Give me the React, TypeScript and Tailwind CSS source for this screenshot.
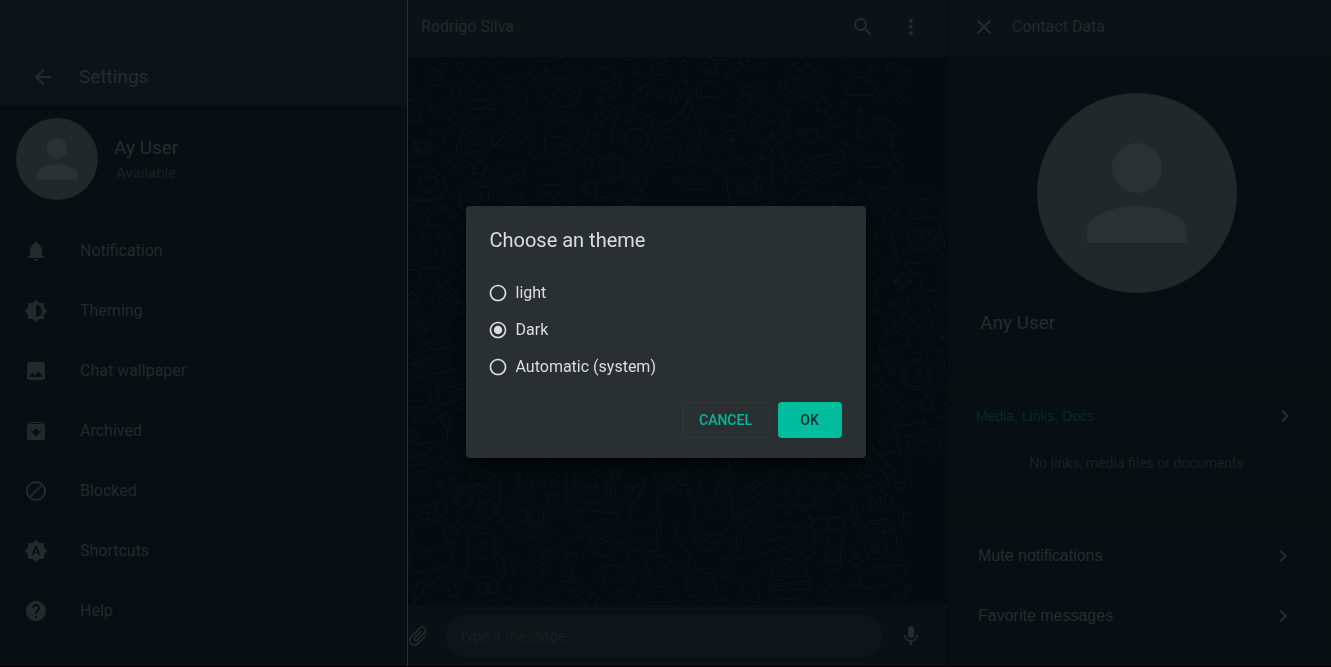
import { useState, type ReactNode } from "react";
import type { IconType } from "react-icons";
import {
  MdArchive,
  MdArrowBack,
  MdAttachFile,
  MdBlock,
  MdBrightness6,
  MdBrightnessAuto,
  MdChevronRight,
  MdClose,
  MdHelp,
  MdImage,
  MdMic,
  MdMoreVert,
  MdNotifications,
  MdPerson,
  MdRadioButtonChecked,
  MdRadioButtonUnchecked,
  MdSearch,
} from "react-icons/md";

const menu: { label: string; Icon: IconType }[] = [
  { label: "Notification", Icon: MdNotifications },
  { label: "Theming", Icon: MdBrightness6 },
  { label: "Chat wallpaper", Icon: MdImage },
  { label: "Archived", Icon: MdArchive },
  { label: "Blocked", Icon: MdBlock },
  { label: "Shortcuts", Icon: MdBrightnessAuto },
  { label: "Help", Icon: MdHelp },
];

const themes = ["light", "Dark", "Automatic (system)"];

function IconButton({ label, children }: { label: string; children: ReactNode }) {
  return (
    <button type="button" aria-label={label} className="grid size-12 shrink-0 place-items-center text-2xl text-[#272b2e]">
      {children}
    </button>
  );
}

function SettingsPanel() {
  return (
    <aside className="flex min-w-0 flex-col border-r border-[#2a2e31] bg-[#070f12]">
      <header className="flex h-[105px] shrink-0 items-end bg-[#0e1317] pb-1 pl-[19px]">
        <IconButton label="Back">
          <MdArrowBack />
        </IconButton>
        <h1 className="pb-2.5 pl-3 text-[19px] leading-7 text-[#282c2f]">Settings</h1>
      </header>
      <div className="flex h-[116px] shrink-0 items-start gap-4 px-4 pt-[13px]">
        <span className="grid size-[82px] shrink-0 place-items-center rounded-full bg-[#222729] text-[#2b3033]">
          <MdPerson size={62} />
        </span>
        <div className="pt-4">
          <p className="text-[19px] leading-7 text-[#282c2f]">Ay User</p>
          <p className="pl-0.5 text-[15px] leading-[22px] text-[#1b2023]">Available</p>
        </div>
      </div>
      <nav>
        {menu.map(({ label, Icon }) => (
          <a key={label} href="#" className="flex h-[60px] items-center gap-8 px-6 text-base text-[#24292c]">
            <Icon size={24} className="shrink-0" />
            {label}
          </a>
        ))}
      </nav>
    </aside>
  );
}

const starPath = "M0-20L6-7L20-5L10 6L13 20L0 13L-13 20L-10 6L-20-5L-6-7Z";
const sparkPath = "M0-24Q3-3 24 0Q3 3 0 24Q-3 3-24 0Q-3-3 0-24Z";
const cloudPath = "M-28 20C-44 12-36-8-22-8C-16-32 16-30 18-12C40-16 46 14 26 20Z";
const boltPath = "M-6-28L14-28L6-6L16-6L-14 30L-6 4L-16 4Z";
const heartPath = "M0 18L-16 2C-26-14-6-24 0-10C8-24 26-12 16 2Z";

function Marks({ d, at }: { d: string; at: number[][] }) {
  return (
    <>
      {at.map(([x, y, s = 1, r = 0]) => (
        <path key={`${x}-${y}`} d={d} transform={`translate(${x} ${y}) rotate(${r}) scale(${s})`} />
      ))}
    </>
  );
}

function Dots({ at }: { at: number[][] }) {
  return (
    <>
      {at.map(([x, y, r = 7]) => (
        <circle key={`${x}-${y}`} cx={x} cy={y} r={r} />
      ))}
    </>
  );
}

function Planet({ x, y, r = 0 }: { x: number; y: number; r?: number }) {
  return (
    <g transform={`translate(${x} ${y}) rotate(${r})`}>
      <path d="M-32-6C-28-38 28-38 32-6M-30 14C-18 38 18 38 30 14" />
      <path d="M-32-8C-60 2-50 12 0 14S60 2 32-8M-32 0C-14 10 14 10 32 0" />
    </g>
  );
}

function Camera({ x, y, r = 0 }: { x: number; y: number; r?: number }) {
  return (
    <g transform={`translate(${x} ${y}) rotate(${r})`}>
      <path d="M-42-24H-22L-16-38H12L18-24H42V36H-42Z" />
      <circle r="20" cy="4" />
      <circle r="8" cy="4" />
    </g>
  );
}

function Gear({ x, y, s = 1 }: { x: number; y: number; s?: number }) {
  return (
    <g transform={`translate(${x} ${y}) scale(${s})`}>
      <path d="M-5-26H5L8-18L17-21L22-14L18-6L26-4V5L18 8L20 17L13 22L6 18L3 26H-6L-8 18L-17 20L-22 13L-18 6L-26 3V-6L-18-8L-20-16L-13-22L-6-18Z" />
      <circle r="11" />
    </g>
  );
}

function Wallpaper() {
  return (
    <svg
      aria-hidden="true"
      viewBox="0 0 539 548"
      preserveAspectRatio="xMidYMid slice"
      className="absolute inset-0 size-full text-[#0b1114]"
      fill="none"
      stroke="currentColor"
      strokeLinejoin="round"
      strokeLinecap="round"
      strokeWidth="4"
    >
      <g transform="translate(-8 -57) scale(.3333)">
        <Dots at={[[132,185],[180,198,11],[229,207],[207,243,11],[72,283],[142,312,12],[96,327],[124,336],[88,394],[188,401],[504,190],[525,213,12],[440,209],[469,205],[602,295],[634,288],[663,262],[634,324,10],[690,327,10],[708,223],[733,229],[782,292],[820,296,10],[853,192,11],[857,245,6],[978,232],[1005,211],[1082,185,12],[1085,260],[1056,305],[1032,318],[1100,307,11],[892,342],[1074,358,11],[1117,367],[1168,300],[1216,321],[1243,282],[1336,307],[1380,330],[1340,187,11],[1411,204],[1473,202,14],[1442,292],[1500,300,11],[1307,365,16],[1275,406,11],[1336,429],[1450,422],[1477,433],[1366,463,11],[408,347],[438,339],[480,338],[374,358,11],[326,410],[332,433],[304,440],[398,426],[140,480],[168,508],[288,527],[308,572],[360,587],[416,516],[453,511],[590,404],[580,437],[600,475],[717,481],[867,401],[875,436,11],[998,421],[1060,412],[1090,420],[1166,414],[1187,446],[1147,464],[948,516],[828,538],[906,495],[590,545],[1325,590],[1353,596],[30,605,9],[1493,550],[1516,565],[1160,340]]} />
        <Marks d={starPath} at={[[167,275,1,10],[47,346,1.1],[238,502,1.3,10],[932,197,1.3],[1042,270,1.1,10],[1268,316,1.2,10],[1387,395,1,10],[570,562,1.3,-10]]} />
        <Marks d={sparkPath} at={[[392,232],[165,354,.9],[134,404,.8],[405,461,.8],[604,352],[826,272,.8],[940,336,.9],[1118,427,1.3],[1203,194,1.2],[1158,513,1.1],[1485,495,1.2],[1380,560],[346,605]]} />
        <Marks d={cloudPath} at={[[248,280,1],[925,270,1],[998,372,1],[1256,230,.75],[1380,262,1.2],[1420,487,.8],[880,550,.95]]} />
        <Marks d={boltPath} at={[[1030,186,1.1,10],[1155,363,1]]} />
        <Marks d={heartPath} at={[[320,248,1],[85,552,1.4],[776,458,.8],[814,445,.8]]} />
        <Planet x={612} y={236} />
        <Planet x={1182} y={266} r={24} />
        <Planet x={335} y={518} r={-30} />
        <Gear x={104} y={231} />
        <Camera x={224} y={588} r={-4} />
        <path d="M238 172C250 200 302 200 315 172M416 172L424 188L486 172M666 172L680 182L704 172L714 200L704 206L692 180M935 172C940 182 985 182 992 172" />
        <circle cx="781" cy="198" r="27" /><circle cx="785" cy="190" r="12" />
        <path d="M22 210C50 230 52 270 44 300H22M22 242C40 236 42 266 22 274" />
        <path d="M426 258C444 228 510 226 540 270C546 330 490 330 448 304C426 292 420 274 426 258Z" />
        <ellipse cx="487" cy="262" rx="16" ry="10" /><path d="M444 258L456 254M454 282L466 284M520 270L526 280M500 244L512 246M540 280C520 300 520 290 505 306" />
        <path d="M700 280C714 260 734 250 742 254L764 240M742 254C758 264 760 272 748 282C730 286 724 300 708 302C696 300 696 288 700 280ZM738 250L754 238M754 268L770 254" />
        <path d="M868 278C868 320 836 370 774 374C778 396 830 390 856 358C886 320 880 300 868 278ZM868 286C852 330 830 358 790 374" />
        <path d="M214 366C252 316 320 268 384 280C382 350 330 392 272 444C250 470 220 440 168 470C166 440 180 400 214 366ZM286 326L212 324L200 338C214 356 236 362 250 354ZM314 376L280 408L272 448L312 410Z" />
        <circle cx="337" cy="317" r="24" /><circle cx="337" cy="317" r="16" />
        <path d="M194 376C230 376 258 404 264 438M204 402C222 380 250 402 236 424C220 446 202 430 220 420C204 418 198 410 204 402Z" />
        <path d="M346 420C350 400 372 392 384 374M384 384L394 374M390 400L400 388M346 420C350 438 366 432 374 416L390 406" />
        <path d="M434 440C428 400 446 384 452 366C460 386 464 374 470 360L482 374L496 354L506 376L536 344L540 372L560 362C572 414 550 450 494 492C462 476 440 462 434 440ZM436 426C440 404 480 402 496 424C514 398 554 402 560 424" />
        <path d="M456 436L470 434L474 450L484 434L494 448L500 432L514 434L502 464L486 456L472 468Z" />
        <g transform="rotate(18 700 390)">
          <rect x="642" y="338" width="108" height="100" rx="14" />
          <path d="M664 354L684 376M684 354L664 376M712 362H736M660 412L682 406" />
          <circle cx="720" cy="416" r="36" /><path d="M706 410H734M706 422H734" />
        </g>
        <circle cx="797" cy="456" r="46" /><path d="M784 474L820 466C816 488 796 494 784 474Z" />
        <path d="M904 382C920 384 920 410 924 444C940 442 954 432 960 418L970 426L1000 420C1000 436 970 450 940 462L960 516C940 516 920 484 904 478L856 490C852 480 872 470 894 462C898 430 896 400 904 382Z" />
        <text x="34" y="468" fontSize="60" fontFamily="Roboto, sans-serif" fontWeight="700" transform="rotate(-10 34 468)">42</text>
        <path d="M22 506C40 492 50 510 60 500C74 494 84 508 98 506C110 510 106 526 124 528C138 536 130 550 144 560C144 574 126 576 124 590C110 604 98 594 88 602C74 610 62 594 48 602L24 590" />
        <path d="M408 576C410 552 440 550 464 556C500 556 520 580 520 612M420 600C412 580 440 564 456 590L470 612M466 584C490 570 510 590 508 612" />
        <path d="M556 516L550 480L574 470L578 504M512 556C494 536 496 512 514 510C534 512 532 536 512 556Z" />
        <circle cx="642" cy="504" r="39" /><circle cx="642" cy="504" r="29" /><path d="M636 486L642 506L630 516" />
        <path d="M716 512L736 502L746 512L742 536L700 622L666 604L702 532ZM702 532L744 544M690 560L728 576M678 584L716 600M708 544C718 552 716 564 704 560" />
        <path d="M974 498L1006 488V474H1026V496L1062 482V462H1084V480L1114 472L1120 560L1134 604L1070 624H990Z" />
        <text x="1006" y="588" fontSize="76" fontFamily="Roboto, sans-serif" fontWeight="700" transform="rotate(-6 1006 588)">24</text>
        <path d="M1188 388H1254L1246 432C1230 434 1220 416 1188 388ZM1220 404L1250 392" />
        <path d="M1190 486L1330 452L1342 514L1206 550L1198 540L1188 544ZM1212 500L1310 472M1216 514L1312 486M1222 528L1310 500" />
        <path d="M1424 360C1444 346 1490 360 1490 400C1476 420 1444 396 1424 376M1426 350L1446 366M1422 368L1446 382" />
        <path d="M1532 214L1508 212L1494 240C1470 240 1462 262 1470 276L1532 298" /><circle cx="1512" cy="244" r="13" />
        <path d="M562 616C580 590 620 580 660 616M1180 616C1180 560 1250 560 1256 600C1270 560 1300 580 1300 620M1396 630C1400 540 1500 540 1520 626M1424 630C1430 580 1480 570 1490 600" />
      </g>

      <g transform="translate(-8 393) scale(.3333)">
        <Dots at={[[46,131],[85,129],[132,126],[120,98],[158,89],[214,80],[242,50,12],[354,78],[357,101],[404,104,10],[428,96],[462,95],[303,210],[324,232],[348,238],[354,270,12],[388,257],[414,267,9],[485,187],[516,148],[564,231],[590,223,12],[624,228],[504,269,12],[541,260],[483,294],[522,314],[500,316],[447,239],[340,330,11],[344,368],[384,418,12],[405,438],[450,419],[328,411],[171,374,10],[142,372],[117,387],[94,398],[690,122,10],[966,105,10],[700,390],[792,350],[1078,167],[1108,160],[1137,169],[1110,197,12],[1160,189],[1122,131],[1076,213],[1200,234],[1200,260],[1299,128],[1348,143],[1322,115],[1281,160,11],[1276,76],[1395,120,10],[1500,106,13],[1428,54],[1344,23],[1230,37],[970,326],[988,354,11],[1092,340],[1088,360,11],[970,384],[1003,384],[975,411],[977,445],[1292,400],[1264,417,10],[1323,448,10],[1368,398],[1348,408],[1362,310],[1490,440],[1514,440,9],[1524,412],[840,128],[868,128]]} />
        <Marks d={starPath} at={[[458,143],[648,64,1.1],[163,421,1.1],[1322,88]]} />
        <Marks d={sparkPath} at={[[172,228],[1224,309],[1368,334],[1462,60,1.2],[1478,165,.8],[924,452,.8],[570,460]]} />
        <Marks d={boltPath} at={[[56,432,1.2,8],[1368,198,.9,-20]]} />
        <Marks d={heartPath} at={[[520,216,.9],[404,54,.8]]} />
        <Gear x={1387} y={54} s={1.2} /><Gear x={669} y={440} s={.9} />
        <Camera x={901} y={398} r={-10} />
        <path d="M22 70C30 110 76 118 86 60M22 26C60 6 100 10 104 44C80 66 50 70 22 68M34 50L70 34L68 44L40 52ZM130 30C144 74 196 70 200 28M354 34V68C380 78 420 78 440 66V30" />
        <circle cx="170" cy="32" r="14" />
        <path d="M264 68L280 80V144L296 190L250 180M264 68C290 66 298 84 298 100V186M170 116L240 102C262 104 272 120 276 142M170 116C200 128 240 116 258 140M166 126C156 110 172 106 200 106" />
        <circle cx="192" cy="150" r="28" /><circle cx="192" cy="150" r="20" /><circle cx="260" cy="178" r="28" /><circle cx="260" cy="178" r="20" />
        <path d="M22 184L124 152C136 150 142 180 136 194L92 214M102 160L116 204M36 226C44 204 104 202 116 220C140 250 146 280 158 320C160 350 70 370 40 368C20 330 34 290 36 226ZM50 208C46 182 90 180 90 206M36 296C70 320 120 300 136 274M136 274L160 270L164 306L156 332M36 310L24 322L28 350" />
        <path d="M202 280C190 220 260 216 284 260C292 300 324 320 312 384L230 406L202 384ZM284 306C310 320 320 350 310 372L294 374ZM204 340L192 356L196 384L212 388M236 410L240 434L262 430V408M264 408L270 432L294 428L290 396" /><circle cx="243" cy="288" r="40" /><path d="M218 286Q224 278 232 286M246 280Q254 272 262 278M230 298Q244 308 252 290" />
        <circle cx="410" cy="198" r="31" /><circle cx="410" cy="198" r="21" />
        <path d="M426 226L440 222L462 254L450 264L436 252ZM384 216C360 222 350 200 364 184L380 174" />
        <ellipse cx="338" cy="162" rx="8" ry="14" transform="rotate(-30 338 162)" /><ellipse cx="362" cy="146" rx="8" ry="14" /><ellipse cx="386" cy="148" rx="8" ry="14" /><ellipse cx="340" cy="190" rx="12" ry="8" />
        <path d="M500 46L650 58L642 188L498 178ZM628 90L638 104L626 156M514 62C536 80 520 90 520 102" /><circle cx="574" cy="115" r="47" /><circle cx="574" cy="115" r="17" /><circle cx="574" cy="115" r="5" /><circle cx="628" cy="162" r="9" /><circle cx="516" cy="148" r="8" />
        <path d="M406 330C376 270 434 280 424 322C446 278 480 316 436 336C470 350 450 384 430 358C430 394 386 396 402 358C366 376 352 326 402 338" /><circle cx="416" cy="342" r="10" />
        <path d="M570 266L636 240L656 280L666 276V296L602 322L598 310L582 314ZM594 270L626 258M598 282L630 268M584 380C600 340 640 340 660 350L680 338L682 360L664 372C644 404 600 410 584 394ZM602 356C616 370 618 388 608 400" />
        <path d="M760 22C770 120 780 130 774 180C770 210 738 238 700 220C680 208 688 170 714 144C734 116 734 90 740 80C700 110 660 160 654 200C650 260 700 286 770 272M774 84L866 60M776 92C782 124 806 130 820 112L828 96C850 116 872 100 870 80M786 94L814 88L810 108L790 110ZM832 82L860 74L858 94L838 96Z" />
        <path d="M870 22C890 50 896 80 902 120C870 180 870 230 930 256C980 260 1006 220 1000 180L988 116C970 140 974 160 976 180C960 210 930 206 912 190C916 160 950 150 950 110C960 80 930 40 896 22M790 208C760 240 766 280 780 302C740 304 720 290 682 308C680 350 710 370 754 364C720 340 740 320 760 320C800 310 820 330 820 362C870 370 880 330 860 300C830 270 820 260 830 222M880 250C880 310 930 320 960 274C930 280 900 270 880 250Z" />
        <circle cx="990" cy="58" r="34" /><path d="M964 36L1014 82M990 24C980 50 990 80 1000 90M1014 34C990 50 970 60 960 70" />
        <path d="M1018 122L1090 76L1144 54C1150 74 1130 84 1040 160L1014 132ZM1024 140L1120 80M1054 98L1062 110M1072 88L1080 100" />
        <circle cx="1210" cy="118" r="57" /><circle cx="1210" cy="118" r="48" /><circle cx="1206" cy="108" r="16" /><path d="M1178 152C1190 126 1232 122 1248 148" />
        <path d="M1036 234C1012 206 1014 180 1036 180C1062 186 1060 210 1036 234ZM982 266L1180 220L1182 286L1004 332ZM1046 274L1066 282L1048 296ZM1082 276L1158 260M1010 264V294C1020 304 1028 284 1022 262Z" /><circle cx="1036" cy="200" r="9" />
        <path d="M1222 190L1246 212L1284 196L1288 230L1240 272L1250 240L1230 232L1240 218ZM1286 210C1296 194 1320 196 1332 210L1338 240H1286ZM1290 240L1270 350C1280 366 1312 360 1320 356L1330 240M1284 286L1326 292M1280 308L1322 314M1276 330L1320 336" />
        <path d="M1390 254L1400 214L1460 208L1486 240L1498 318C1470 330 1430 330 1402 322ZM1390 254L1450 246L1486 240M1450 246L1468 326M1424 278C1408 300 1416 308 1424 306C1434 304 1432 290 1424 278ZM1404 220L1460 220M1460 208L1452 246" />
        <path d="M1404 106L1424 112L1440 98L1444 124L1462 134L1440 142L1446 176L1428 156L1410 176L1414 144L1400 132L1416 128Z" />
        <path d="M1380 398C1370 360 1440 344 1510 346C1550 380 1450 420 1380 410ZM1410 380L1420 360M1440 374L1452 352M1470 368L1484 350" />
        <path d="M1112 378C1110 340 1150 322 1170 326C1200 326 1220 356 1222 378ZM1106 392L1222 376L1240 392L1104 404ZM1106 412L1236 402C1240 414 1220 410 1210 422L1180 416L1160 426L1140 420L1108 424ZM1116 428L1124 444C1160 454 1210 450 1230 420" /><Dots at={[[1134,350,2],[1156,342,2],[1178,340,2],[1190,354,2],[1160,358,2]]} />
        <path d="M1040 388C1060 380 1084 402 1076 430L1080 460L1010 440L1024 424C1030 406 1030 396 1040 388ZM1060 400C1070 410 1068 424 1060 430M1356 430L1424 438V464M1356 430L1364 464M1240 464C1250 440 1290 440 1300 464M430 464C460 410 590 400 604 464M480 420L484 394L540 398L544 414M498 350L520 340L524 350L516 394M500 360L522 364M498 378L520 382M500 464C504 430 556 430 560 464M280 456C290 440 340 444 348 464" />
        <circle cx="776" cy="398" r="16" /><circle cx="738" cy="408" r="11" /><circle cx="814" cy="412" r="11" /><path d="M740 458C744 414 808 410 816 458ZM716 446C716 430 728 420 742 428M826 456C834 440 826 426 814 430M1532 190L1508 188L1512 230L1532 242M1416 0L1440 14L1500 0M1532 30L1512 80H1532" />
      </g>

      <g transform="translate(-4 133) scale(.3333)">
        <Dots at={[[31,84],[120,54],[164,44],[148,71,10],[154,217,9],[90,280,16],[45,300,6],[77,330,8],[107,364,8],[52,460,9],[79,461,8],[33,686,6],[63,687,13],[92,660,6],[165,656,7],[177,172,11],[157,12],[20,38,10],[178,702,10]]} />
        <Marks d={sparkPath} at={[[74,71,.9]]} />
        <Marks d={starPath} at={[[24,324,1.1],[164,350,1.2],[28,738,1.1]]} />
        <path d="M24 20C40 14 50 40 70 30C90 40 100 24 116 28M184 98C150 104 152 124 184 120M12 240C50 230 60 270 40 282C30 290 20 286 12 284" />
        <circle cx="82" cy="170" r="66" /><path d="M50 140C56 126 76 126 84 134C80 144 64 140 50 152ZM94 138C104 124 114 144 104 150ZM126 144L136 158M62 180C66 164 80 170 74 186ZM90 184C94 168 108 170 100 190ZM112 172C122 160 130 176 118 194ZM28 170C30 190 38 196 46 200M60 204L78 210" />
        <path d="M184 236L112 286C96 300 106 320 126 332L184 280M112 286L150 318M122 278L160 308" />
        <circle cx="45" cy="399" r="37" /><circle cx="45" cy="399" r="28" /><path d="M24 378L66 420M24 420L66 378M45 370V428M16 399H74" />
        <circle cx="119" cy="411" r="16" /><circle cx="119" cy="408" r="6" /><path d="M122 428L128 448L142 444M128 448L114 454" />
        <path d="M12 494L150 468C164 466 176 490 180 528L16 572M24 518L132 490C140 490 138 500 130 502L24 528M30 544L130 512C138 514 134 524 126 526L34 550M184 560L110 578C96 582 96 600 110 642L184 626M124 594L184 580M128 606L184 594M134 620L184 606" />
        <path d="M12 598C30 580 50 584 56 596C82 592 92 630 70 648C50 660 30 656 12 650M86 696L134 658M110 690C112 664 136 672 146 700C138 724 120 716 110 690ZM130 716C134 752 120 780 100 820M184 740C150 760 140 790 130 820M12 790C30 760 70 750 92 762C90 780 60 800 12 810" />
      </g>

      <g transform="translate(454 133) scale(.3333)">
        <Dots at={[[34,20,9],[62,26],[36,62,10],[50,137,8],[18,118,8],[40,189,13],[72,227,12],[71,267,8],[91,341,8],[129,335,9],[180,335,11],[162,307,7],[194,360,9],[225,346,7],[176,411,7],[41,365,9],[18,390,9],[29,421,10],[111,501,8],[80,514,8],[41,534,9],[90,548,8],[97,631,9],[62,637,8],[54,708,13],[30,672,7],[61,750,11],[26,768,9],[18,809,8],[54,801,7],[237,596,7],[237,685,7],[214,810,8]]} />
        <Marks d={sparkPath} at={[[120,275,1.2],[60,585]]} />
        <Marks d={starPath} at={[[195,638,1.2]]} />
        <circle cx="175" cy="58" r="68" /><path d="M144 74C134 30 180 20 204 28C240 30 250 80 220 82C196 74 180 92 150 84ZM156 64C160 46 172 36 180 42C184 52 170 60 166 66ZM108 44C80 46 64 80 66 110L94 118M82 64L100 74M74 84L94 92" />
        <circle cx="204" cy="153" r="33" /><circle cx="204" cy="153" r="12" /><Dots at={[[204,130,5],[224,144,5],[218,168,5],[190,172,5],[182,148,5]]} />
        <path d="M92 110C84 160 92 220 130 224M104 216C100 180 96 140 110 126C140 118 150 160 148 180L180 178L212 198C210 220 180 214 130 220C140 260 170 240 176 260V280C180 310 230 310 250 294C246 270 230 260 232 240C230 220 220 218 206 216M230 106C250 140 256 180 236 202M12 250C40 244 50 260 50 280L44 310L52 330L12 348M12 262C30 260 40 290 44 310" />
        <circle cx="78" cy="394" r="23" /><path d="M50 484C44 450 60 430 80 430L92 422L106 426C130 430 142 450 146 466ZM124 370L134 368L138 384L156 382L158 392L142 398L146 414L136 416L128 402L114 402L112 392L126 386Z" />
        <path d="M220 370L256 384M220 370L192 468L238 488L256 460M210 406L256 410" /><circle cx="230" cy="422" r="5" /><circle cx="240" cy="444" r="5" />
        <circle cx="165" cy="554" r="46" /><circle cx="165" cy="554" r="37" /><circle cx="166" cy="500" r="14" /><path d="M156 572L160 546L176 536L172 562ZM165 522V530M165 578V586M132 554H140M190 554H198" />
        <path d="M92 690C80 680 90 670 130 642C150 640 150 656 140 664L98 690M100 680L132 656M98 710L186 696L194 714M98 710L112 786L136 784M136 738L224 714L236 774L148 796ZM136 738L186 756L224 714M150 796L170 756M236 774L200 750" />
        <path d="M256 500L244 516L250 540L240 566L256 570M256 616C240 624 246 646 256 650" />
      </g>
    </svg>
  );
}

function ChatPanel() {
  return (
    <main className="flex min-w-0 flex-col bg-[#050c0f]">
      <header className="flex h-[57px] shrink-0 items-center bg-[#0c1215] pb-1 pl-[13px] pr-3">
        <h2 className="flex-1 text-base text-[#24292c]">Rodrigo Silva</h2>
        <IconButton label="Search messages">
          <MdSearch />
        </IconButton>
        <IconButton label="Menu">
          <MdMoreVert />
        </IconButton>
      </header>
      <div className="relative min-h-0 flex-1 overflow-hidden">
        <Wallpaper />
      </div>
      <footer className="flex h-[61px] shrink-0 items-center gap-1 overflow-hidden bg-[#0a1013] pr-3">
        <button type="button" aria-label="Attach a file" className="-ml-0.5 grid h-12 w-6 shrink-0 place-items-center text-2xl text-[#272b2e]">
          <MdAttachFile className="rotate-45" />
        </button>
        <input
          aria-label="Message"
          placeholder="type a message"
          className="ml-[11px] h-[42px] min-w-0 flex-1 rounded-full bg-[#0e1417] px-4 text-[15px] text-[#24292c] outline-none placeholder:text-[#1a1f22]"
        />
        <IconButton label="Record a voice message">
          <MdMic />
        </IconButton>
      </footer>
    </main>
  );
}

function ContactPanel() {
  return (
    <aside className="flex min-w-0 flex-col overflow-hidden border-l border-[#060b0d] bg-[#070f12] font-['Liberation_Sans',sans-serif]">
      <header className="flex h-14 shrink-0 items-center bg-[#0c1215] pb-0.5 pl-3">
        <IconButton label="Close contact data">
          <MdClose />
        </IconButton>
        <h2 className="pl-1 font-['Roboto',sans-serif] text-base text-[#24292c]">Contact Data</h2>
      </header>
      <div className="flex-1 border-r-[6px] border-[#090e11]">
        <section className="flex h-[324px] flex-col items-center pt-[37px]">
          <span className="grid size-[200px] shrink-0 place-items-center rounded-full bg-[#222729] text-[#2b3033]">
            <MdPerson size={150} />
          </span>
          <p className="w-full pl-8 pt-4 font-['Roboto',sans-serif] text-[19px] leading-7 text-[#282c2f]">Any User</p>
        </section>
        <div className="h-3 bg-[#090e11]" />
        <section className="h-[114px] px-7">
          <a href="#" className="flex h-12 items-center justify-between text-sm text-[#072a25]">
            Media, Links, Docs
            <MdChevronRight size={24} className="text-[#2a2e31]" />
          </a>
          <p className="pt-[11px] text-center font-['Roboto',sans-serif] text-sm leading-6 text-[#1c2124]">
            No links, media files or documents
          </p>
        </section>
        <div className="h-5 bg-[#090e11]" />
        <section className="pl-[30px]">
          {["Mute notifications", "Favorite messages"].map((label) => (
            <a
              key={label}
              href="#"
              className="flex h-[60px] items-center justify-between border-b border-[#0d1316] pr-[30px] text-base text-[#282c2f]"
            >
              {label}
              <MdChevronRight size={24} />
            </a>
          ))}
        </section>
      </div>
    </aside>
  );
}

function ThemeDialog() {
  const [theme, setTheme] = useState("Dark");
  return (
    <div className="fixed inset-0 grid place-items-center pb-[3px]">
      <form
        role="dialog"
        aria-modal="true"
        aria-labelledby="theme-title"
        onSubmit={(event) => event.preventDefault()}
        className="w-[400px] max-w-full rounded-sm bg-[#2a2f32] px-6 pb-5 pt-[18px] text-[#dcdddd] shadow-lg shadow-black/60"
      >
        <h2 id="theme-title" className="text-xl leading-8">
          Choose an theme
        </h2>
        <fieldset className="-ml-0.5 pt-[18px]">
          {themes.map((name) => (
            <label key={name} className="flex h-[37px] items-center gap-2 text-base">
              <span className="relative size-5">
                <input
                  type="radio"
                  name="theme"
                  checked={theme === name}
                  onChange={() => setTheme(name)}
                  className="block size-5 appearance-none"
                />
                {theme === name ? (
                  <MdRadioButtonChecked size={20} className="pointer-events-none absolute inset-0" />
                ) : (
                  <MdRadioButtonUnchecked size={20} className="pointer-events-none absolute inset-0" />
                )}
              </span>
              {name}
            </label>
          ))}
        </fieldset>
        <div className="flex justify-end gap-2 pt-[17px] text-sm font-medium">
          <button type="button" className="h-9 w-22 rounded-sm border border-[#31363a] text-[#00b99b]">
            CANCEL
          </button>
          <button type="submit" className="h-9 w-16 rounded-sm bg-[#00bc9f] text-[#0b2b2c]">
            OK
          </button>
        </div>
      </form>
    </div>
  );
}

export default function App() {
  return (
    <div className="grid h-screen grid-cols-[408fr_539fr_384fr] grid-rows-[minmax(0,1fr)] overflow-hidden bg-black pb-px font-['Roboto',sans-serif]">
      <SettingsPanel />
      <ChatPanel />
      <ContactPanel />
      <ThemeDialog />
    </div>
  );
}
